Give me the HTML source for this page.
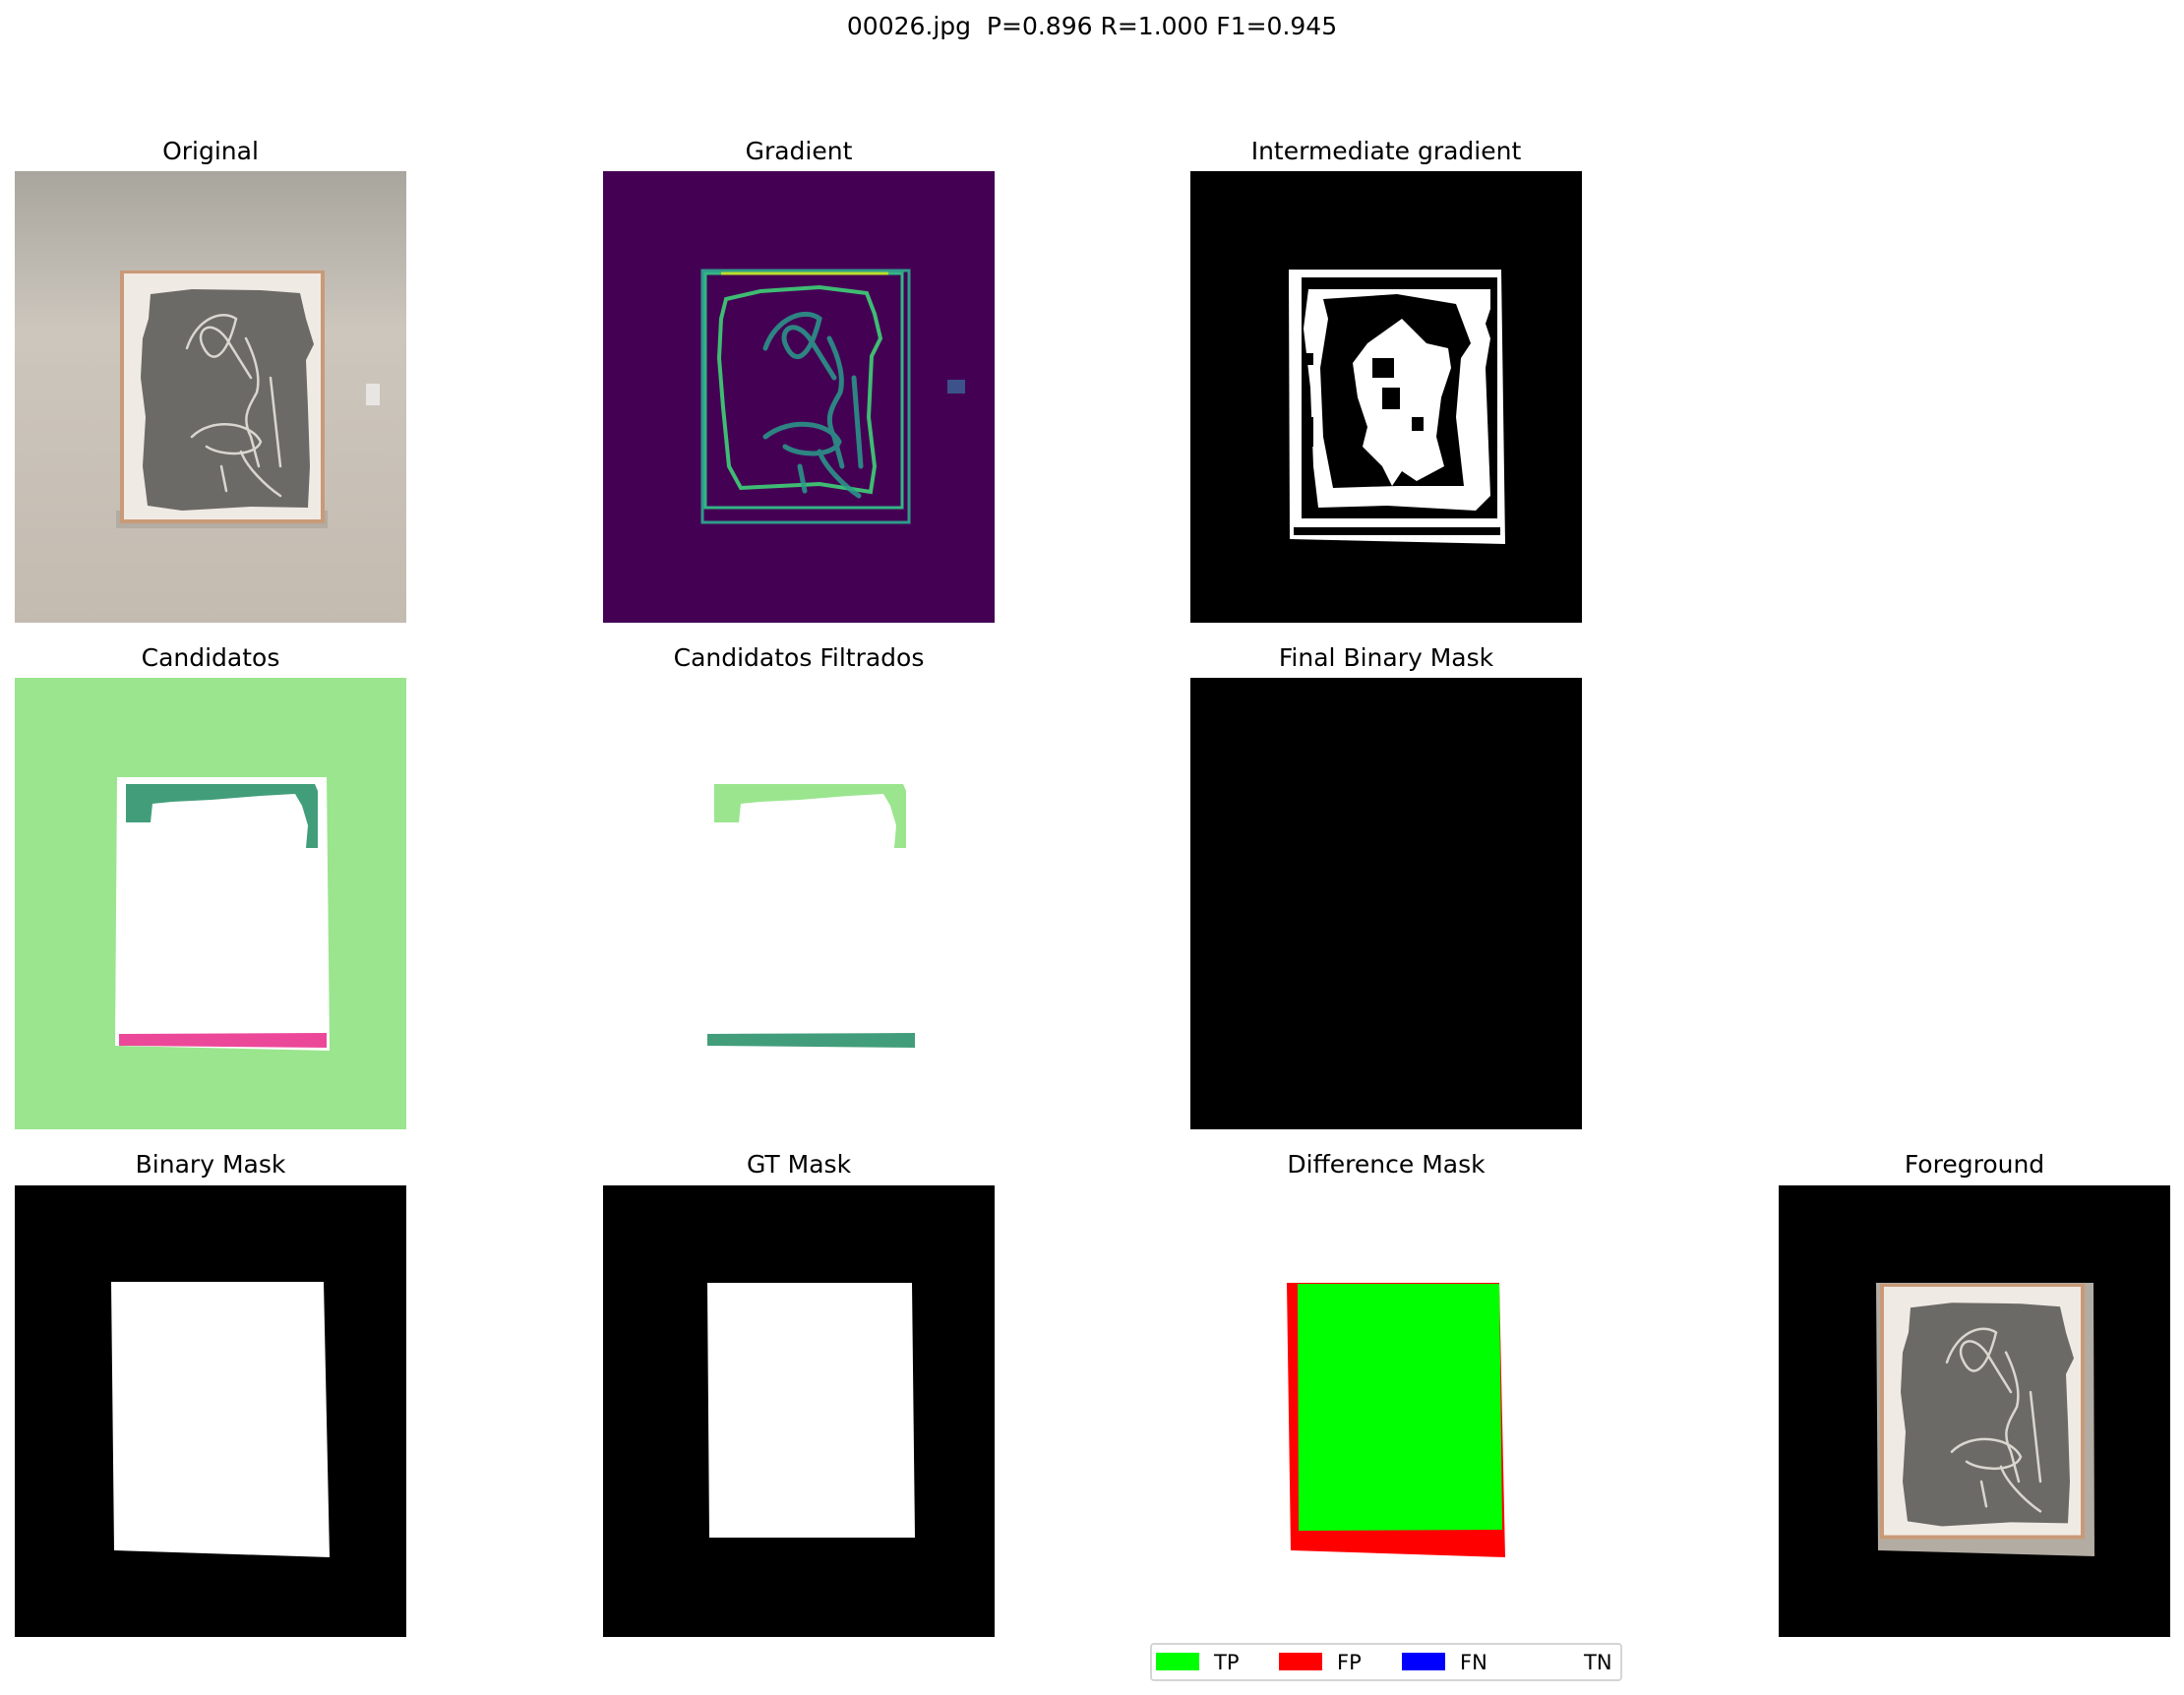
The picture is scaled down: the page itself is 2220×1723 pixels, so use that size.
<!DOCTYPE html>
<html><head><meta charset="utf-8"><style>
html,body{margin:0;padding:0;background:#fff;width:2220px;height:1723px;overflow:hidden;position:relative;font-family:"DejaVu Sans","Liberation Sans",sans-serif;}
.t{position:absolute;font-size:25px;color:#000;white-space:nowrap;transform:translateX(-50%);line-height:1;}
.p{position:absolute;width:398px;height:459px;}
svg{display:block}
</style></head><body>
<div class="t" style="left:1110px;top:14px">00026.jpg&nbsp; P=0.896 R=1.000 F1=0.945</div>

<div class="t" style="left:214px;top:141px">Original</div>
<div class="t" style="left:812px;top:141px">Gradient</div>
<div class="t" style="left:1409px;top:141px">Intermediate gradient</div>
<div class="t" style="left:214px;top:656px">Candidatos</div>
<div class="t" style="left:812px;top:656px">Candidatos Filtrados</div>
<div class="t" style="left:1409px;top:656px">Final Binary Mask</div>
<div class="t" style="left:214px;top:1171px">Binary Mask</div>
<div class="t" style="left:812px;top:1171px">GT Mask</div>
<div class="t" style="left:1409px;top:1171px">Difference Mask</div>
<div class="t" style="left:2007px;top:1171px">Foreground</div>

<svg width="0" height="0" style="position:absolute"><defs>
<linearGradient id="wall" x1="0" y1="0" x2="0" y2="1"><stop offset="0" stop-color="#a9a69e"/><stop offset="0.35" stop-color="#ccc6bd"/><stop offset="1" stop-color="#c4bbb0"/></linearGradient>
<g id="paint">
<rect x="107" y="101" width="208" height="257" fill="#c99a78"/>
<rect x="111" y="104" width="200" height="250" fill="#f0eae4"/>
<path d="M138 125 L180 120 L250 121 L290 124 L296 150 L304 176 L296 192 L298 240 L300 300 L298 342 L240 341 L170 345 L135 340 L130 300 L133 250 L128 210 L130 170 L136 150 Z" fill="#6b6a66"/>
<g fill="none" stroke="#d9d6cf" stroke-width="2.5" stroke-linecap="round">
<path d="M175 180 C185 150 210 140 225 150 C215 190 200 200 190 175 C185 160 200 150 215 170 L240 210"/>
<path d="M235 170 C245 190 250 210 246 225 C238 240 230 250 240 270 L248 300"/>
<path d="M180 270 C200 250 240 255 250 275 C245 290 210 290 195 280"/>
<path d="M210 300 L215 325 M230 285 C235 300 255 320 270 330 M260 210 L270 300"/>
</g>
</g>
</defs></svg>

<!-- Original -->
<div class="p" style="left:15px;top:174px"><svg width="398" height="459">
<rect width="398" height="459" fill="url(#wall)"/>
<rect x="103" y="345" width="215" height="18" fill="#b3aca3"/>
<use href="#paint"/>
<rect x="357" y="216" width="14" height="22" fill="#e8e6e2"/>
</svg></div>

<!-- Gradient -->
<div class="p" style="left:613px;top:174px"><svg width="398" height="459">
<rect width="398" height="459" fill="#440154"/>
<g fill="none">
<rect x="101" y="101" width="210" height="256" stroke="#2f9c8a" stroke-width="3"/>
<rect x="104" y="104" width="200" height="238" stroke="#33b585" stroke-width="3"/>
<line x1="120" y1="104" x2="290" y2="104" stroke="#b8de29" stroke-width="3"/>
<path d="M125 130 L160 122 L220 118 L268 124 L276 145 L282 170 L273 188 L270 250 L276 300 L272 326 L220 318 L140 322 L128 300 L122 240 L118 190 L120 150 Z" stroke="#3fbc73" stroke-width="4"/>
<g stroke="#2a9c8c" stroke-width="5" stroke-linecap="round" opacity="0.85">
<path d="M165 180 C175 150 205 138 220 150 C210 190 195 200 185 175 C180 160 195 150 210 170 L235 210"/>
<path d="M230 170 C240 190 245 210 241 225 C233 240 225 250 235 270 L243 300"/>
<path d="M165 270 C190 250 230 255 240 275 C235 290 200 290 185 280"/>
<path d="M200 300 L205 325 M220 285 C225 300 245 320 260 330 M255 210 L262 300"/>
</g>
<rect x="350" y="212" width="18" height="14" fill="#3b528b"/>
</g>
</svg></div>

<!-- Intermediate -->
<div class="p" style="left:1210px;top:174px"><svg width="398" height="459">
<rect width="398" height="459" fill="#000"/>
<path d="M100 100 L316 100 L320 379 L101 374 Z" fill="#fff"/>
<path d="M113 108 L312 108 L312 353 L113 353 Z" fill="#000"/>
<path d="M120 120 L305 120 L305 140 L300 155 L305 170 L300 200 L305 330 L290 345 L200 340 L130 342 L125 300 L122 220 L115 160 Z" fill="#fff"/>
<path d="M135 130 L210 125 L270 135 L285 175 L275 190 L270 250 L278 320 L210 320 L145 322 L135 270 L132 200 L140 150 Z" fill="#000"/>
<path d="M180 175 L215 150 L240 175 L262 180 L265 200 L255 230 L250 270 L258 300 L230 315 L215 305 L205 320 L195 300 L185 290 L175 280 L180 260 L170 230 L165 195 Z" fill="#fff"/>
<rect x="185" y="190" width="22" height="20" fill="#000"/><rect x="195" y="220" width="18" height="22" fill="#000"/><rect x="225" y="250" width="12" height="14" fill="#000"/>
<rect x="115" y="185" width="10" height="12" fill="#000"/><rect x="115" y="250" width="10" height="30" fill="#000"/><rect x="115" y="320" width="10" height="10" fill="#000"/>
<rect x="105" y="362" width="210" height="8" fill="#000"/>
</svg></div>

<!-- Candidatos -->
<div class="p" style="left:15px;top:689px"><svg width="398" height="459">
<rect width="398" height="459" fill="#9ae58e"/>
<path d="M104 101 L317 101 L320 379 L102 374 Z" fill="#fff"/>
<path d="M113 108 L305 108 L308 115 L308 173 L296 173 L298 150 L292 130 L285 118 L250 120 L200 124 L160 126 L140 128 L138 147 L113 147 Z" fill="#429e7a"/>
<path d="M106 362 L317 361 L317 376 L106 374 Z" fill="#ec4899"/>
</svg></div>

<!-- Filtrados -->
<div class="p" style="left:613px;top:689px"><svg width="398" height="459">
<rect width="398" height="459" fill="#fff"/>
<path d="M113 108 L305 108 L308 115 L308 173 L296 173 L298 150 L292 130 L285 118 L250 120 L200 124 L160 126 L140 128 L138 147 L113 147 Z" fill="#9ae58e"/>
<path d="M106 362 L317 361 L317 376 L106 374 Z" fill="#429e7a"/>
</svg></div>

<!-- Final -->
<div class="p" style="left:1210px;top:689px;background:#000"></div>

<!-- Binary Mask -->
<div class="p" style="left:15px;top:1205px"><svg width="398" height="459">
<rect width="398" height="459" fill="#000"/>
<path d="M98 98 L314 98 L320 378 L101 371 Z" fill="#fff"/>
</svg></div>

<!-- GT -->
<div class="p" style="left:613px;top:1205px"><svg width="398" height="459">
<rect width="398" height="459" fill="#000"/>
<path d="M106 99 L314 99 L317 358 L108 358 Z" fill="#fff"/>
</svg></div>

<!-- Difference -->
<div class="p" style="left:1210px;top:1205px"><svg width="398" height="459">
<rect width="398" height="459" fill="#fff"/>
<path d="M98 99 L314 99 L320 378 L102 371 Z" fill="#ff0000"/>
<path d="M109 100 L314 100 L317 350 L110 351 Z" fill="#00ff00"/>
</svg></div>

<!-- Foreground -->
<div class="p" style="left:1808px;top:1205px"><svg width="398" height="459">
<rect width="398" height="459" fill="#000"/>
<path d="M99 99 L320 99 L321 377 L101 371 Z" fill="#b3aca3"/>
<g transform="translate(-4,-2) scale(1,1.01)"><use href="#paint"/></g>
</svg></div>

<!-- Legend -->
<div style="position:absolute;left:1169px;top:1670px;width:476px;height:35px;border:2px solid #d5d5d5;border-radius:4px;background:#fff;font-size:21px">
<div style="position:absolute;left:4px;top:8px;width:44px;height:18px;background:#00ff00"></div>
<div style="position:absolute;left:63px;top:6px">TP</div>
<div style="position:absolute;left:129px;top:8px;width:44px;height:18px;background:#ff0000"></div>
<div style="position:absolute;left:188px;top:6px">FP</div>
<div style="position:absolute;left:254px;top:8px;width:44px;height:18px;background:#0000ff"></div>
<div style="position:absolute;left:313px;top:6px">FN</div>
<div style="position:absolute;left:439px;top:6px">TN</div>
</div>
</body></html>
